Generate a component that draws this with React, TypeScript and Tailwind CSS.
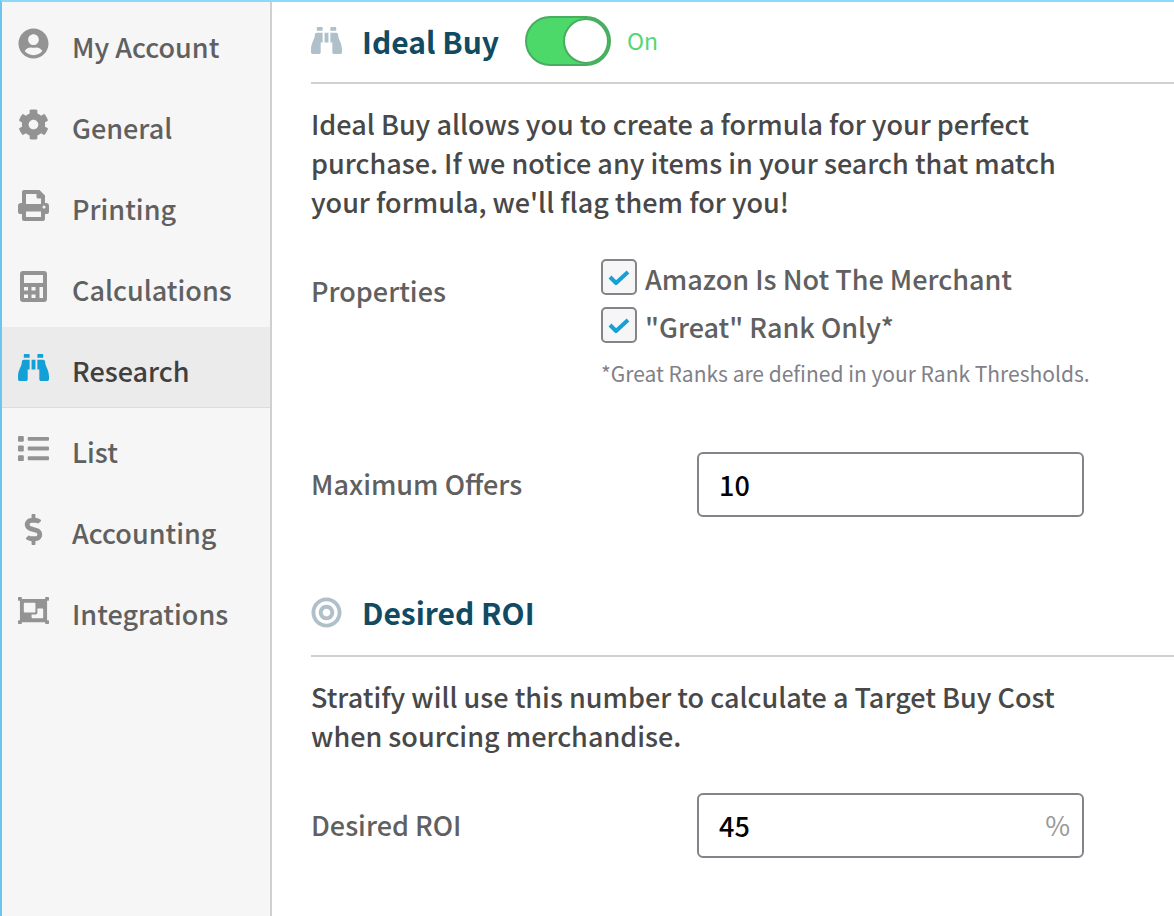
import React, { useState } from 'react';
import {
  FaBinoculars,
  FaBullseye,
  FaCog,
  FaDollarSign,
  FaList,
  FaObjectGroup,
  FaUserCircle,
} from 'react-icons/fa';
import { clsx } from 'clsx';

interface IconProps {
  className?: string;
}

const PrinterIcon: React.FC<IconProps> = ({ className }) => (
  <svg viewBox="0 0 31 31" className={className} fill="currentColor" fillRule="evenodd" aria-hidden="true">
    <path d="M6 0H21.5L27 5.5V13H28Q31 13 31 16V22Q31 24 29 24H27V29Q27 31 25 31H6Q4 31 4 29V24H2Q0 24 0 22V16Q0 13 3 13H4V2Q4 0 6 0ZM8 4V14H23V8.5H20Q18.500 8.500 18.500 7V4ZM8 21.500V27H23V21.500ZM26 15.500A1.500 1.500 0 1 0 26 18.500A1.500 1.500 0 1 0 26 15.500Z" />
  </svg>
);

const CalculatorIcon: React.FC<IconProps> = ({ className }) => (
  <svg viewBox="0 0 31 31" className={className} fill="currentColor" fillRule="evenodd" aria-hidden="true">
    <path d="M5 0H26Q29 0 29 3V28Q29 31 26 31H5Q2 31 2 28V3Q2 0 5 0ZM6 4V12H25V4ZM6 16V19.500H10V16ZM13.500 16V19.500H17.500V16ZM21.500 16V27H25V16ZM6 23.500V27H10V23.500ZM13.500 23.500V27H17.500V23.500Z" />
  </svg>
);

const navItems = [
  { label: 'My Account', icon: FaUserCircle },
  { label: 'General', icon: FaCog },
  { label: 'Printing', icon: PrinterIcon },
  { label: 'Calculations', icon: CalculatorIcon },
  { label: 'Research', icon: FaBinoculars },
  { label: 'List', icon: FaList },
  { label: 'Accounting', icon: FaDollarSign },
  { label: 'Integrations', icon: FaObjectGroup },
];

const Sidebar: React.FC = () => (
  <aside className="w-[270px] shrink-0 border-r-2 border-[#d0d0d0] bg-[#f6f6f6]">
    <nav aria-label="Settings" className="pt-px">
      {navItems.map(({ label, icon: Icon }) => {
        const active = label === 'Research';
        return (
          <a
            key={label}
            href="#"
            aria-current={active ? 'page' : undefined}
            className={clsx(
              'flex h-[81px] gap-[23px] border-b pl-4',
              active ? 'border-[#d5dee8] bg-[#ebebeb] text-[#404040]' : 'border-transparent text-[#606060]',
            )}
          >
            <Icon className={clsx('mt-[25px] size-[31px]', active ? 'text-[#12a0d7]' : 'text-[#939393]')} />
            <span className="mt-6 leading-10">{label}</span>
          </a>
        );
      })}
    </nav>
  </aside>
);

interface CheckOptionProps {
  label: string;
}

const CheckOption: React.FC<CheckOptionProps> = ({ label }) => (
  <label className="flex h-12 gap-2 text-[#606060]">
    <span className="grid size-9 shrink-0">
      <input
        type="checkbox"
        defaultChecked
        className="peer col-start-1 row-start-1 size-9 appearance-none rounded-[5px] border-2 border-[#838389] bg-[#f6f6f6]"
      />
      <svg
        viewBox="0 0 36 36"
        className="pointer-events-none invisible col-start-1 row-start-1 size-9 text-[#18a0d6] peer-checked:visible"
        fill="none"
        stroke="currentColor"
        strokeWidth="4"
        strokeLinejoin="round"
        aria-hidden="true"
      >
        <path d="M9 18l6 6L27 13" />
      </svg>
    </span>
    <span className="leading-10">{label}</span>
  </label>
);

const App: React.FC = () => {
  const [idealBuy, setIdealBuy] = useState(true);

  return (
    <div className="flex min-h-screen border-t-2 border-l-2 border-t-[#8ed8f8] border-l-[#6cc5ec] bg-white font-['Noto_Sans_CJK_SC','Noto_Sans',sans-serif] text-[27px] font-medium text-[#484848]">
      <Sidebar />

      <main className="min-w-0 flex-1 pl-[39px]">
        <section>
          <header className="flex h-[82px] items-center border-b-2 border-[#d0d0d0] pb-[3px]">
            <FaBinoculars className="size-[31px] text-[#b0c0ca]" />
            <h2 className="ml-5 text-[30px] leading-10 font-bold text-[#124a62]">Ideal Buy</h2>
            <button
              type="button"
              role="switch"
              aria-checked={idealBuy}
              aria-label="Ideal Buy"
              onClick={() => setIdealBuy(!idealBuy)}
              className={clsx(
                'ml-[26px] flex h-[50px] w-[86px] rounded-full border-2',
                idealBuy ? 'justify-end border-[#48ad60] bg-[#4cd96a]' : 'border-gray-400 bg-gray-200',
              )}
            >
              <span className="size-[46px] rounded-full border-2 border-[#48ad60] bg-white" />
            </button>
            <span className="ml-4 text-[23px] font-normal text-[#55d672]">{idealBuy ? 'On' : 'Off'}</span>
          </header>

          <p className="mt-5 max-w-[760px] leading-[39px]">
            Ideal Buy allows you to create a formula for your perfect purchase. If we notice any items in your search
            that match your formula, we'll flag them for you!
          </p>

          <fieldset className="mt-[38px] flex max-w-[773px]">
            <legend className="float-left mt-3 w-[290px] leading-10 text-[#606060]">Properties</legend>
            <div>
              <CheckOption label="Amazon Is Not The Merchant" />
              <CheckOption label={'"Great" Rank Only*'} />
              <p className="mt-1 text-[21px] leading-7 font-normal whitespace-nowrap text-[#808087]">
                *Great Ranks are defined in your Rank Thresholds.
              </p>
            </div>
          </fieldset>

          <div className="mt-[65px] flex max-w-[773px] items-center justify-between">
            <label htmlFor="max-offers" className="text-[#606060]">Maximum Offers</label>
            <input
              id="max-offers"
              type="text"
              defaultValue="10"
              className="h-[65px] w-[387px] rounded-md border-2 border-[#838389] px-5 text-black"
            />
          </div>
        </section>

        <section className="mt-14">
          <header className="flex h-[84px] items-center border-b-2 border-[#d0d0d0] pb-1">
            <FaBullseye className="size-[31px] text-[#b0c0ca]" />
            <h2 className="ml-5 text-[30px] leading-10 font-bold text-[#124a62]">Desired ROI</h2>
          </header>

          <p className="mt-5 max-w-[760px] leading-[39px]">
            Stratify will use this number to calculate a Target Buy Cost when sourcing merchandise.
          </p>

          <div className="mt-[38px] flex max-w-[773px] items-center justify-between">
            <label htmlFor="desired-roi" className="text-[#606060]">Desired ROI</label>
            <div className="flex h-[65px] w-[387px] items-center rounded-md border-2 border-[#838389] pr-3">
              <input
                id="desired-roi"
                type="text"
                defaultValue="45"
                className="h-full min-w-0 flex-1 pl-5 text-black outline-none"
              />
              <span className="font-normal text-[#999999]">%</span>
            </div>
          </div>
        </section>
      </main>
    </div>
  );
};

export default App;
